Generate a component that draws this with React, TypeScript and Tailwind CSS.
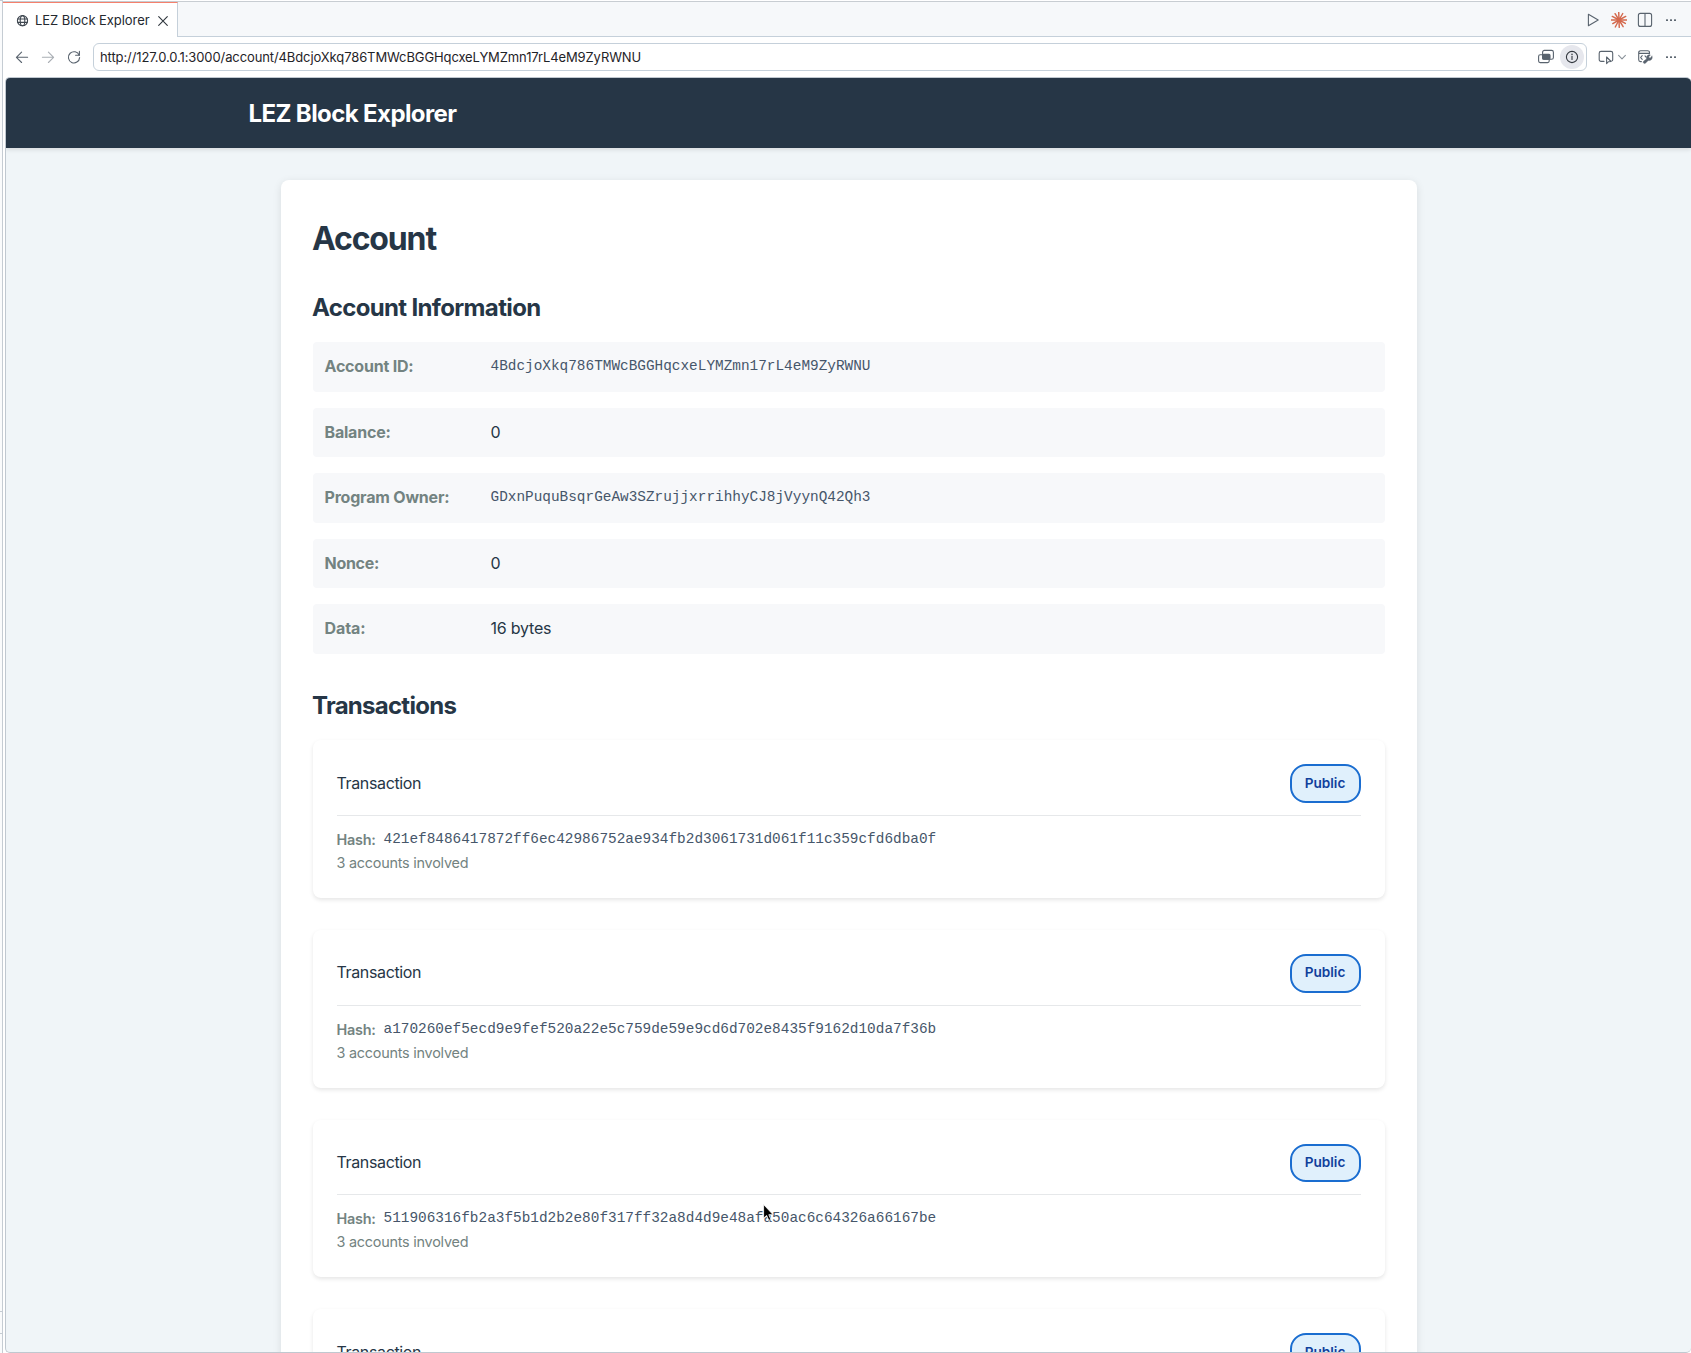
import type { ReactNode } from 'react'

const ADDRESS = '4BdcjoXkq786TMWcBGGHqcxeLYMZmn17rL4eM9ZyRWNU'

const INFO: { label: string; value: string; mono?: boolean; tracking: string }[] = [
  { label: 'Account ID:', value: ADDRESS, mono: true, tracking: 'tracking-[-0.2px]' },
  { label: 'Balance:', value: '0', tracking: 'tracking-[-0.2px]' },
  { label: 'Program Owner:', value: 'GDxnPuquBsqrGeAw3SZrujjxrrihhyCJ8jVyynQ42Qh3', mono: true, tracking: 'tracking-[-0.2px]' },
  { label: 'Nonce:', value: '0', tracking: 'tracking-[-0.3px]' },
  { label: 'Data:', value: '16 bytes', tracking: 'tracking-[-0.1px]' },
]

const HASHES = [
  '421ef8486417872ff6ec42986752ae934fb2d3061731d061f11c359cfd6dba0f',
  'a170260ef5ecd9e9fef520a22e5c759de59e9cd6d702e8435f9162d10da7f36b',
  '511906316fb2a3f5b1d2b2e80f317ff32a8d4d9e48afa50ac6c64326a66167be',
  '',
]

const MONO = "font-['Courier_New','Liberation_Mono',monospace] text-[14.4px] text-[#46566a]"

function Icon({ children, className = '', w = 16, h = 16 }: { children: ReactNode; className?: string; w?: number; h?: number }) {
  return (
    <svg
      width={w}
      height={h}
      viewBox={`0 0 ${w} ${h}`}
      fill="none"
      stroke="currentColor"
      strokeWidth="1.1"
      strokeLinecap="round"
      strokeLinejoin="round"
      className={`shrink-0 ${className}`}
    >
      {children}
    </svg>
  )
}

function Dots() {
  return (
    <Icon className="text-[#59636e]">
      <g fill="currentColor" stroke="none">
        <rect x="3" y="7.2" width="2" height="1.8" rx=".5" />
        <rect x="7" y="7.2" width="2" height="1.8" rx=".5" />
        <rect x="11" y="7.2" width="2" height="1.8" rx=".5" />
      </g>
    </Icon>
  )
}

const RAYS = [0, 28, 58, 88, 118, 150, 180, 208, 238, 268, 300, 332]
const LENGTHS = [7.6, 7.2, 7.8, 7.4, 7.9, 7.2, 7.8, 7.6, 7.4, 7.9, 7.5, 7.6]

function Burst() {
  return (
    <Icon className="text-[#d4694d]">
      <g strokeWidth="1.45">
        {RAYS.map((a, i) => {
          const r = (a * Math.PI) / 180
          return <line key={a} x1="8" y1="8" x2={8 + LENGTHS[i] * Math.cos(r)} y2={8 + LENGTHS[i] * Math.sin(r)} />
        })}
      </g>
      <circle cx="8" cy="8" r="2.4" fill="currentColor" stroke="none" />
    </Icon>
  )
}

function TabStrip() {
  return (
    <div className="flex h-[35px] shrink-0">
      <div className="flex w-[175px] items-center border-t border-r border-t-[#f5806c] border-r-[#c5d0da] bg-white pt-[1px] pl-[12px]">
        <Icon className="text-[#3f4750]">
          <circle cx="7.5" cy="7.7" r="5.1" />
          <ellipse cx="7.5" cy="7.7" rx="2.3" ry="5.1" />
          <path d="M2.8 6h9.4M2.8 9.4h9.4" />
        </Icon>
        <span className="ml-[4px] text-[13px] leading-none tracking-[-0.06px] whitespace-nowrap text-[#24292f]">LEZ Block Explorer</span>
        <Icon className="ml-[5.5px] text-[#2f363d]">
          <path d="M3.7 3.7l8.6 8.6M12.3 3.7l-8.6 8.6" />
        </Icon>
      </div>
      <div className="flex flex-1 items-center justify-end gap-[10px] border-b border-[#c5d0da] bg-[#f6f8fa] pt-[2px] pr-[12px] text-[#59636e]">
        <Icon>
          <path d="M3.4 2.3v11.4L13.2 8z" />
        </Icon>
        <Burst />
        <Icon>
          <rect x="1.4" y="1.4" width="13.2" height="13" rx="2" />
          <path d="M8 1.6v12.6" />
        </Icon>
        <Dots />
      </div>
    </div>
  )
}

function Toolbar() {
  return (
    <div className="flex h-[40px] shrink-0 items-center bg-white pr-[12px] text-[#59636e]">
      <Icon className="ml-[11px]">
        <path d="M13.6 8.3H2.6M7.6 3.1L2.4 8.3l5.2 5.2" />
      </Icon>
      <Icon className="ml-[10px] text-[#a9aeb4]">
        <path d="M2.4 8.3h11M8.4 3.1l5.2 5.2-5.2 5.2" />
      </Icon>
      <Icon className="ml-[10px]">
        <path d="M13.2 6.2A5.6 5.6 0 1 0 13.6 8.6" />
        <path d="M13.4 2.4v3.9H9.6" />
      </Icon>
      <div className="ml-[11px] flex h-[28px] flex-1 items-center rounded-[6px] border border-[#c5d0da] bg-white pr-[2px] pl-[6px]">
        <span className="flex-1 text-[13px] leading-none tracking-[-0.105px] whitespace-nowrap text-[#1f2328]">
          http://127.0.0.1:3000/account/{ADDRESS}
        </span>
        <Icon>
          <path d="M4.6 5.8H2.2a1.6 1.6 0 0 0-1.6 1.6v4.6a1.6 1.6 0 0 0 1.6 1.6h7.4a1.6 1.6 0 0 0 1.6-1.6v-1.3" />
          <rect x="4.6" y="1.4" width="10.8" height="8.8" rx="1.8" />
          <rect x="4.6" y="5.4" width="7.4" height="4.8" rx="1" fill="currentColor" />
        </Icon>
        <span className="ml-[6px] flex size-[24px] items-center justify-center rounded-full bg-[#e6e7ed]">
          <Icon className="text-[#33383f]">
            <circle cx="8" cy="8" r="5.6" />
            <path d="M8 7.4v3.1" />
            <path d="M8 5.3v.3" strokeWidth="1.4" />
          </Icon>
        </span>
      </div>
      <Icon className="ml-[11px]">
        <path d="M6 12.4H3a1.8 1.8 0 0 1-1.8-1.8V4.2A1.8 1.8 0 0 1 3 2.4h9.9a1.8 1.8 0 0 1 1.8 1.8v6.4a1.8 1.8 0 0 1-.7 1.3" />
        <path d="M8.6 8v6.6l1.8-1.9 2.7-.2z" />
      </Icon>
      <Icon w={12} className="ml-[2px] text-[#8a929a]">
        <path d="M2.6 6.4L6 9.8l3.4-3.4" />
      </Icon>
      <Icon className="ml-[9px]">
        <path d="M4.4 12.6H3.6A1.9 1.9 0 0 1 1.7 10.7V3.6a1.9 1.9 0 0 1 1.9-1.9h7a1.9 1.9 0 0 1 1.9 1.9v1.2M1.7 4.4h10.8" />
        <path d="M5.2 6.6L3.6 8.5l1.6 1.9M8 6.8l.9 1" />
        <path
          d="M15 7.2l-2 2-1.4-1.3 1.8-2a3.1 3.1 0 0 0-3.9 4l-3 2.4a1.4 1.4 0 0 0 1.9 2l2.8-2.9a3.1 3.1 0 0 0 3.8-4.2z"
          fill="currentColor"
          strokeWidth=".4"
        />
      </Icon>
      <span className="ml-[10px] flex">
        <Dots />
      </span>
    </div>
  )
}

function InfoRow({ label, value, mono, tracking }: (typeof INFO)[number]) {
  return (
    <div className="flex h-[49.6px] items-start gap-4 rounded-[4px] bg-[#f7f8fa] p-3">
      <span className={`w-[150px] font-[650] whitespace-nowrap text-[#738381] ${tracking}`}>{label}</span>
      {mono ? <span className={`${MONO} leading-[25px]`}>{value}</span> : <span className="tracking-[-0.22px]">{value}</span>}
    </div>
  )
}

function TransactionCard({ hash }: { hash: string }) {
  return (
    <div className="rounded-[8px] bg-white p-6 shadow-[0_2px_4px_rgba(0,0,0,0.1)]">
      <div className="flex items-center justify-between border-b border-[#e6e8ea] pb-3">
        <span className="tracking-[-0.36px]">Transaction</span>
        <span className="flex h-[38.56px] w-[71px] items-center justify-center rounded-[16px] border-2 border-[#1a6dd0] bg-[#e0f0fc] text-[13.6px] font-semibold text-[#11409c]">
          Public
        </span>
      </div>
      <div className="mt-3 h-[46.08px] text-[14.4px] leading-[23.04px] text-[#738381]">
        <div className="flex h-[23.04px] items-start gap-[8px]">
          <span className="w-[39px] font-semibold tracking-[-0.25px]">Hash:</span>
          <span className={`${MONO} leading-[23.04px]`}>{hash}</span>
        </div>
        <div className="tracking-[-0.23px]">3 accounts involved</div>
      </div>
    </div>
  )
}

export default function App() {
  return (
    <div className="relative flex h-[1353px] w-[1691px] overflow-hidden bg-white font-['Inter',sans-serif] text-[#263646]">
      <div className="flex w-[3px] shrink-0 flex-col border-t border-r border-[#c5ccd3] bg-[#fafbfc] pt-[1310px]">
        <div className="h-[23px] border-y border-[#c5ccd3]" />
      </div>
      <div className="flex min-w-0 flex-1 flex-col pt-[1px]">
        <div className="h-px shrink-0 bg-[#c8cdd2]" />
        <TabStrip />
        <Toolbar />
        <div className="ml-[2px] flex min-h-0 flex-1 flex-col overflow-hidden rounded-[5px] border border-r-0 border-[#c0c8d0] bg-[#f0f5f8] leading-[25.6px]">
          <header className="z-10 h-[70.4px] shrink-0 bg-[#263646] pt-[17px] shadow-[0_2px_4px_rgba(0,0,0,0.1)]">
            <div className="mx-auto w-[1200px] text-[24px] leading-[38.4px] font-bold tracking-[-0.6px] text-white">LEZ Block Explorer</div>
          </header>
          <main className="mx-auto mt-8 h-[1300px] w-[1136px] shrink-0 rounded-[8px] bg-white px-8 pt-[33px] shadow-[0_2px_8px_rgba(0,0,0,0.1)]">
            <h1 className="-ml-[0.5px] text-[32px] leading-[51.2px] font-bold tracking-[-1.15px]">Account</h1>
            <h2 className="mt-6 -ml-[0.5px] text-[24px] leading-[38.4px] font-bold tracking-[-0.65px]">Account Information</h2>
            <div className="mt-[15px] flex flex-col gap-4">
              {INFO.map((row) => (
                <InfoRow key={row.label} {...row} />
              ))}
            </div>
            <h2 className="mt-[33px] -ml-[0.5px] text-[24px] leading-[38.4px] font-bold tracking-[-0.73px]">Transactions</h2>
            <div className="mt-[15px] flex flex-col gap-8">
              {HASHES.map((hash, i) => (
                <TransactionCard key={i} hash={hash} />
              ))}
            </div>
          </main>
        </div>
      </div>
      <svg className="absolute top-[1203px] left-[762px] z-20" width="14" height="20" viewBox="0 0 14 20">
        <path d="M1.6 1.6v13.6l3-2.8 2.2 5 2.1-.9-2.1-4.8h4.3z" fill="#000" stroke="#fff" strokeWidth=".8" strokeLinejoin="round" />
      </svg>
    </div>
  )
}
